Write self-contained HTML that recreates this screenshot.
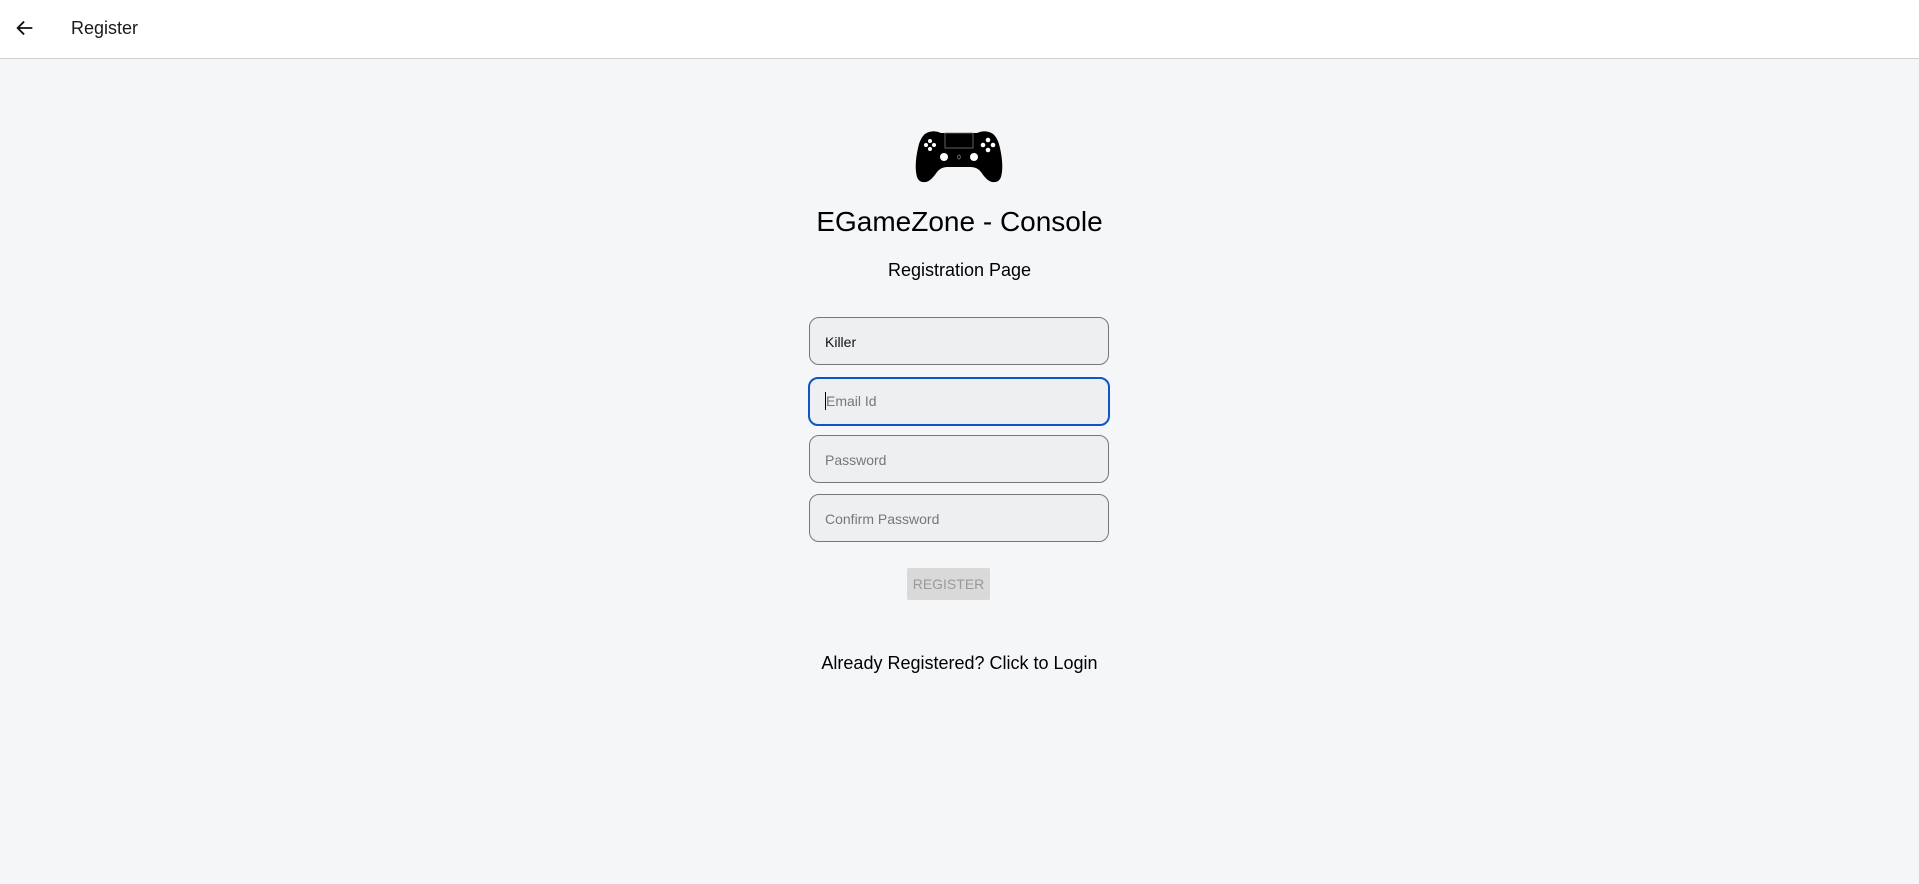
<!DOCTYPE html>
<html><head><style>
body{margin:0;width:1919px;height:884px;background:#f5f6f8;font-family:"Liberation Sans",sans-serif;position:relative;overflow:hidden}
.hdr{position:absolute;left:0;top:0;width:1919px;height:58px;background:#fff;border-bottom:1px solid #d0d0d0}
.hdr span{position:absolute;left:71px;top:18px;font-size:18px;color:#1a1a1a}
.inp{position:absolute;left:809px;width:298px;height:46px;border:1px solid #777;border-radius:10px;background:#eeeff1;box-sizing:content-box}
.inp span{position:absolute;left:15px;top:16px;font-size:14px;color:#777}
.t{position:absolute;left:0;width:1919px;text-align:center;color:#000}
</style></head><body>
<div class="hdr">
<svg style="position:absolute;left:14px;top:17px" width="22" height="22" viewBox="0 0 24 24"><path d="M20 12H5M11 5l-7 7 7 7" fill="none" stroke="#111" stroke-width="2"/></svg>
<span>Register</span></div>
<svg style="position:absolute;left:915px;top:130px" width="88" height="53" viewBox="0 0 88 53">
<path d="M14 2 Q20 0 26 3 H62 Q68 0 74 2 Q82 4 85 18 Q89 36 86 47 Q84 53 77 52 Q72 51 66 42 Q62 37 56 37 H32 Q26 37 22 42 Q16 51 11 52 Q4 53 2 47 Q-1 36 3 18 Q6 4 14 2Z" fill="#000"/>
<rect x="30" y="3" width="28" height="15" fill="none" stroke="#777" stroke-width="0.8"/>
<g fill="#fff"><circle cx="15" cy="11" r="2"/><circle cx="15" cy="19" r="2"/><circle cx="11" cy="15" r="2"/><circle cx="19" cy="15" r="2"/>
<circle cx="73" cy="10" r="2.3"/><circle cx="73" cy="20" r="2.3"/><circle cx="68" cy="15" r="2.3"/><circle cx="78" cy="15" r="2.3"/>
<circle cx="29" cy="27" r="4"/><circle cx="59" cy="27" r="4"/></g>
<ellipse cx="44" cy="27" rx="1.3" ry="2" fill="none" stroke="#888" stroke-width="0.7"/>
</svg>
<div class="t" style="top:206px;font-size:28px">EGameZone - Console</div>
<div class="t" style="top:260px;font-size:18px">Registration Page</div>
<div class="inp" style="top:317px"><span style="color:#111">Killer</span></div>
<div class="inp" style="top:377px;border:2px solid #0b57c5;left:808px;height:45px"><span style="left:16px;top:14px">Email Id</span><div style="position:absolute;left:15px;top:13px;width:1px;height:18px;background:#000"></div></div>
<div class="inp" style="top:435px"><span>Password</span></div>
<div class="inp" style="top:494px"><span>Confirm Password</span></div>
<div style="position:absolute;left:907px;top:568px;width:83px;height:32px;background:#d9d9d9;border-radius:2px;color:#9a9a9a;font-size:14px;text-align:center;line-height:33px">REGISTER</div>
<div class="t" style="top:653px;font-size:18px">Already Registered? Click to Login</div>
</body></html>
